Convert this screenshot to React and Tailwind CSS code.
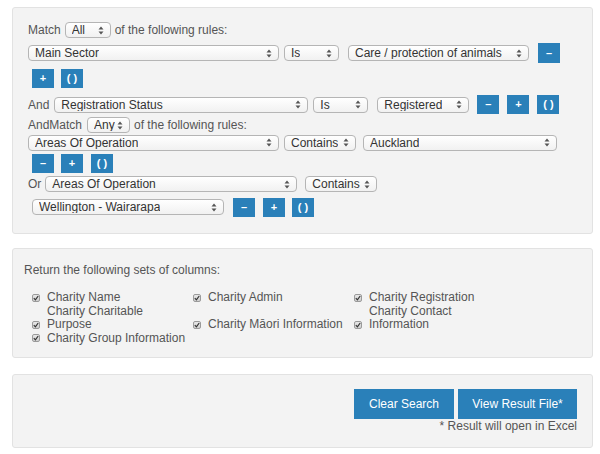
import React from 'react'

function Arrows() {
  return (
    <svg width="6" height="9" viewBox="0 0 6 9" className="shrink-0">
      <path d="M3 0.5 L5.5 3.5 L0.5 3.5 Z" fill="#555" />
      <path d="M3 8.5 L5.5 5.5 L0.5 5.5 Z" fill="#555" />
    </svg>
  )
}

function Select({ label, w, className = '' }) {
  return (
    <div
      className={`flex h-[16px] shrink-0 items-center justify-between rounded-[4px] border border-[#b5b5b5] bg-gradient-to-b from-white to-[#f1f1f1] pl-[6px] pr-[6px] text-[12px] leading-none text-[#333] ${className}`}
      style={{ width: w }}
    >
      <span className="truncate">{label}</span>
      <Arrows />
    </div>
  )
}

function Btn({ children, className = '' }) {
  return (
    <div
      className={`flex h-[19px] w-[22px] shrink-0 items-center justify-center bg-[#2a80b9] text-[11px] font-bold leading-none text-white ${className}`}
    >
      {children}
    </div>
  )
}

function Check() {
  return (
    <span className="flex h-[8px] w-[8px] shrink-0 items-center justify-center rounded-[2px] border border-[#9a9a9a] bg-gradient-to-b from-[#e8e8e8] to-[#cfcfcf]">
      <svg width="6" height="6" viewBox="0 0 6 6">
        <path d="M0.8 3.2 L2.4 4.8 L5.2 1" stroke="#333" strokeWidth="1.2" fill="none" />
      </svg>
    </span>
  )
}

const columns = [
  [
    { text: 'Charity Name', box: true },
    { text: 'Charity Admin', box: true },
    { text: 'Charity Registration', box: true },
  ],
  [
    { text: 'Charity Charitable', box: false },
    null,
    { text: 'Charity Contact', box: false },
  ],
  [
    { text: 'Purpose', box: true },
    { text: 'Charity Māori Information', box: true },
    { text: 'Information', box: true },
  ],
  [{ text: 'Charity Group Information', box: true }, null, null],
]

export default function App() {
  return (
    <div className="min-h-[454px] bg-white pt-[7px] pl-[12px] pr-[7px] font-['Liberation_Sans',Arial,sans-serif] text-[12px] text-[#555]">
      {/* Rules */}
      <div className="flex flex-col rounded-[3px] border border-[#e2e2e2] bg-[#f3f3f3] pl-[15px] pt-[14px] pb-[17px]">
        <div className="flex h-[16px] items-center">
          <span>Match</span>
          <Select label="All" w={46} className="ml-[4px]" />
          <span className="ml-[4px]">of the following rules:</span>
        </div>

        <div className="mt-[5px] flex h-[20px] items-center">
          <Select label="Main Sector" w={251} />
          <Select label="Is" w={55} className="ml-[5px]" />
          <Select label="Care / protection of animals" w={181} className="ml-[9px]" />
          <Btn className="ml-[9px] h-[20px]">–</Btn>
        </div>

        <div className="mt-[6px] flex h-[19px] items-center pl-[4px]">
          <Btn>+</Btn>
          <Btn className="ml-[7px]">( )</Btn>
        </div>

        <div className="mt-[8px] flex h-[17px] items-center">
          <span>And</span>
          <Select label="Registration Status" w={254} className="ml-[5px]" />
          <Select label="Is" w={55} className="ml-[5px]" />
          <Select label="Registered" w={92} className="ml-[9px]" />
          <Btn className="ml-[8px] h-[17px]">–</Btn>
          <Btn className="ml-[8px] h-[17px]">+</Btn>
          <Btn className="ml-[8px] h-[17px]">( )</Btn>
        </div>

        <div className="mt-[4px] flex h-[16px] items-center">
          <span>AndMatch</span>
          <Select label="Any" w={43} className="ml-[5px]" />
          <span className="ml-[4px]">of the following rules:</span>
        </div>

        <div className="mt-[1px] flex h-[17px] items-center">
          <Select label="Areas Of Operation" w={251} />
          <Select label="Contains" w={72} className="ml-[5px]" />
          <Select label="Auckland" w={194} className="ml-[7px]" />
        </div>

        <div className="mt-[3px] flex h-[19px] items-center pl-[4px]">
          <Btn>–</Btn>
          <Btn className="ml-[7px]">+</Btn>
          <Btn className="ml-[8px]">( )</Btn>
        </div>

        <div className="mt-[3px] flex h-[16px] items-center">
          <span>Or</span>
          <Select label="Areas Of Operation" w={252} className="ml-[4px]" />
          <Select label="Contains" w={72} className="ml-[8px]" />
        </div>

        <div className="mt-[6px] flex h-[18px] items-center pl-[4px]">
          <Select label="Wellington - Wairarapa" w={192} />
          <Btn className="ml-[9px] h-[18px]">–</Btn>
          <Btn className="ml-[8px] h-[18px]">+</Btn>
          <Btn className="ml-[7px] h-[18px]">( )</Btn>
        </div>
      </div>

      {/* Columns */}
      <div className="mt-[14px] rounded-[3px] border border-[#e2e2e2] bg-[#f3f3f3] pl-[11px] pt-[14px] pb-[12px] text-[12px]">
        <div className="leading-[14px]">Return the following sets of columns:</div>
        <div className="mt-[14px] grid grid-cols-[161px_161px_161px] pl-[8px] leading-[13.5px]">
          {columns.flat().map((item, i) =>
            item ? (
              <div key={i} className="flex h-[13.5px] items-center">
                <span className="flex w-[15px] shrink-0">{item.box && <Check />}</span>
                <span>{item.text}</span>
              </div>
            ) : (
              <div key={i} className="h-[13.5px]" />
            )
          )}
        </div>
      </div>

      {/* Actions */}
      <div className="mt-[16px] flex flex-col items-end rounded-[3px] border border-[#e2e2e2] bg-[#f3f3f3] pr-[15px] pt-[14px] pb-[14px]">
        <div className="flex gap-[4px]">
          <div className="flex h-[30px] w-[100px] items-center justify-center bg-[#2a80b9] text-[12px] text-white">
            Clear Search
          </div>
          <div className="flex h-[30px] w-[119px] items-center justify-center bg-[#2a80b9] text-[12px] text-white">
            View Result File*
          </div>
        </div>
        <div className="mt-[1px] leading-[13px]">* Result will open in Excel</div>
      </div>
    </div>
  )
}
